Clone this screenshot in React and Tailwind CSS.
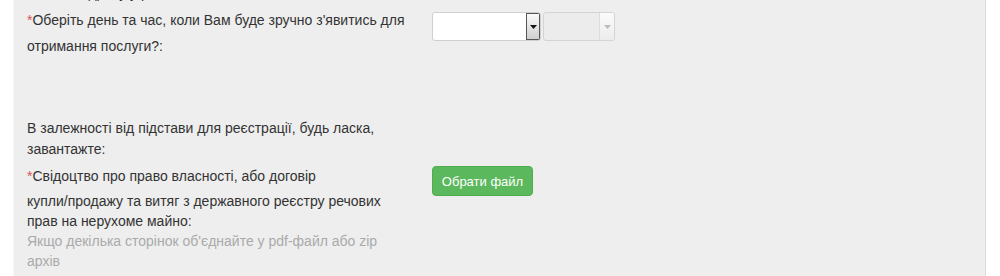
export default function App() {
  const font = { fontFamily: '"Liberation Sans", Arial, sans-serif' };
  return (
    <div className="w-[1000px] h-[276px] bg-white flex overflow-hidden" style={font}>
      <div className="w-[14px] shrink-0 bg-white border-r border-[#f7f7f7]" />
      <div className="w-[972px] shrink-0 bg-[#eeeeee] border-r border-[#dcdcdc] relative">
        <div className="h-[3px] overflow-hidden pl-[13px] text-[14px] text-[#333]">
          <div className="leading-[20px] -mt-[17px]">Вкажіть адресу у районі</div>
        </div>
        <div className="flex pl-[13px]">
          <div className="w-[405px] text-[14px] text-[#333]">
            <div className="leading-[20px] mt-[7px]">
              <span className="text-[#d9534f]">*</span>Оберіть день та час, коли Вам буде зручно з'явитись для
            </div>
            <div className="leading-[20px] mt-[6px]">отримання послуги?:</div>
          </div>
          <div className="flex gap-[2px] mt-[9px]">
            <div className="w-[109px] h-[29px] flex bg-white border border-[#cfcfcf] rounded-[3px] overflow-hidden">
              <div className="flex-1" />
              <div className="w-[14px] h-full border border-[#555] bg-gradient-to-b from-[#fafafa] to-[#cfcfcf] flex items-center justify-center">
                <svg width="7" height="4" viewBox="0 0 7 4"><path d="M0 0h7L3.5 4z" fill="#111" /></svg>
              </div>
            </div>
            <div className="w-[72px] h-[29px] flex bg-[#ececec] border border-[#d4d4d4] rounded-[3px] overflow-hidden">
              <div className="flex-1" />
              <div className="w-[15px] h-full border-l border-[#dcdcdc] bg-gradient-to-b from-[#fbfbfb] to-[#ececec] flex items-center justify-center">
                <svg width="7" height="4" viewBox="0 0 7 4"><path d="M0 0h7L3.5 4z" fill="#bbb" /></svg>
              </div>
            </div>
          </div>
        </div>
        <div className="pl-[13px] mt-[62px] w-[418px] text-[14px] text-[#333]">
          <div className="leading-[21px]">В залежності від підстави для реєстрації, будь ласка,</div>
          <div className="leading-[21px]">завантажте:</div>
        </div>
        <div className="flex pl-[13px] mt-[6px]">
          <div className="w-[405px] text-[14px] text-[#333]">
            <div className="leading-[20px]">
              <span className="text-[#d9534f]">*</span>Свідоцтво про право власності, або договір
            </div>
            <div className="leading-[20px] mt-[5px]">купли/продажу та витяг з державного реєстру речових</div>
            <div className="leading-[20px]">прав на нерухоме майно:</div>
            <div className="leading-[20px] text-[#aaaaaa]">Якщо декілька сторінок об'єднайте у pdf-файл або zip</div>
            <div className="leading-[20px] text-[#aaaaaa]">архів</div>
          </div>
          <div>
            <button className="w-[101px] h-[30px] rounded-[4px] bg-[#5cb85c] border border-[#4cae4c] text-white text-[13px] leading-none">
              Обрати файл
            </button>
          </div>
        </div>
      </div>
      <div className="flex-1 bg-white" />
    </div>
  );
}
